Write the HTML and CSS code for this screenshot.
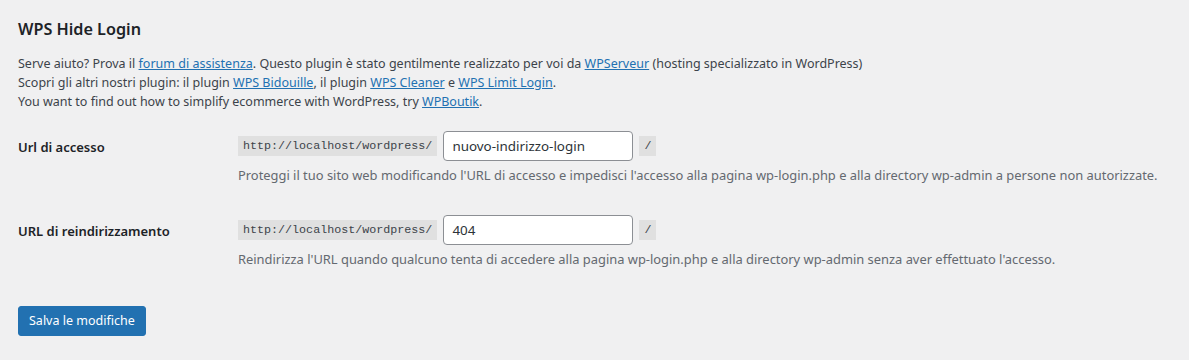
FILE: index.html
```html
<!DOCTYPE html>
<html lang="it">
<head>
  <meta charset="UTF-8">
  <meta name="viewport" content="width=device-width, initial-scale=1.0">
  <title>WPS Hide Login</title>
  <link rel="stylesheet" href="styles.css">
</head>
<body>
  <div class="wrap">
    <h2 class="section-title">WPS Hide Login</h2>

    <p class="intro">
      Serve aiuto? Prova il <a href="#">forum di assistenza</a>. Questo plugin è stato gentilmente realizzato per voi da <a href="#">WPServeur</a> (hosting specializzato in WordPress)<br>
      Scopri gli altri nostri plugin: il plugin <a href="#">WPS Bidouille</a>, il plugin <a href="#">WPS Cleaner</a> e <a href="#">WPS Limit Login</a>.<br>
      You want to find out how to simplify ecommerce with WordPress, try <a href="#">WPBoutik</a>.
    </p>

    <form onsubmit="return false;">
      <table class="form-table">
        <tr>
          <th><label for="whl_page">Url di accesso</label></th>
          <td>
            <div class="url-field">
              <code>http://localhost/wordpress/</code>
              <input type="text" id="whl_page" value="nuovo-indirizzo-login">
              <code>/</code>
            </div>
            <p class="description">Proteggi il tuo sito web modificando l'URL di accesso e impedisci l'accesso alla pagina wp-login.php e alla directory wp-admin a persone non autorizzate.</p>
          </td>
        </tr>
        <tr>
          <th><label for="whl_redirect">URL di reindirizzamento</label></th>
          <td>
            <div class="url-field">
              <code>http://localhost/wordpress/</code>
              <input type="text" id="whl_redirect" value="404">
              <code>/</code>
            </div>
            <p class="description">Reindirizza l'URL quando qualcuno tenta di accedere alla pagina wp-login.php e alla directory wp-admin senza aver effettuato l'accesso.</p>
          </td>
        </tr>
      </table>

      <p class="submit">
        <button type="submit" class="button-primary">Salva le modifiche</button>
      </p>
    </form>
  </div>
</body>
</html>
```

FILE: styles.css
```css
body {
  margin: 0;
  background: #f0f0f1;
  color: #3c434a;
  font-family: "Noto Sans", sans-serif;
  font-size: 12.5px;
  line-height: 1.4em;
}

.wrap {
  padding: 0 8px 0 18px;
}

a {
  color: #2271b1;
  text-decoration: underline;
}

.section-title {
  font-size: 16.2px;
  font-weight: 600;
  color: #1d2327;
  margin: 0;
  padding: 20px 0 0;
  line-height: 1.2;
}

.intro {
  margin: 15px 0 0;
  line-height: 19px;
}

.form-table {
  border-collapse: collapse;
  margin-top: 5px;
  width: 100%;
}

.form-table th {
  width: 200px;
  padding: 23px 10px 20px 0;
  text-align: left;
  vertical-align: top;
  font-size: 13px;
  font-weight: 600;
  line-height: 1.3;
  color: #1d2327;
}

.form-table td {
  padding: 15px 10px;
  vertical-align: middle;
  line-height: 1.3;
}

.url-field {
  display: flex;
  align-items: center;
  gap: 6px;
}

code {
  background: #e0e0e0;
  padding: 3px 5px 2px;
  font-family: "Liberation Mono", monospace;
  font-size: 11.7px;
  line-height: 15px;
  color: #3c434a;
}

input[type="text"] {
  box-sizing: border-box;
  width: 190px;
  height: 30px;
  padding: 0 8px;
  margin: 0;
  border: 1px solid #8c8f94;
  border-radius: 4px;
  background: #fff;
  color: #2c3338;
  font-family: inherit;
  font-size: 13.4px;
  line-height: 2;
}

.description {
  margin: 5px 0 0;
  color: #646970;
  font-size: 12.9px;
  line-height: 19px;
}

.submit {
  margin: 22px 0 0;
}

.button-primary {
  height: 30px;
  padding: 0 10px;
  border: 1px solid #2271b1;
  border-radius: 3px;
  background: #2271b1;
  color: #fff;
  font-family: inherit;
  font-size: 12.5px;
  line-height: 28px;
  cursor: pointer;
}
```
